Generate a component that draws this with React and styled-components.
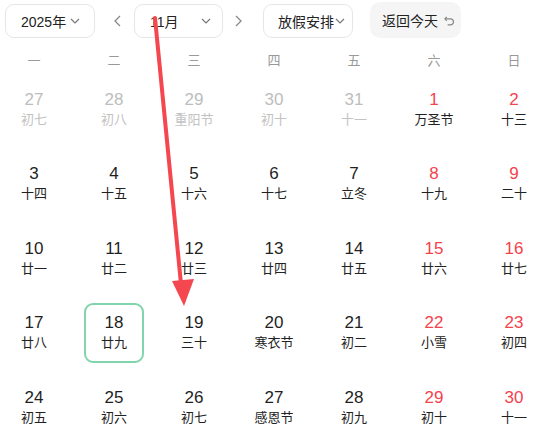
import React from 'react';
import styled, { createGlobalStyle } from 'styled-components';

const GlobalStyle = createGlobalStyle`
    html, body {
        margin: 0;
        padding: 0;
        background: #ffffff;
        font-family: "Liberation Sans", Arial, "Noto Sans CJK SC", sans-serif;
    }
`;

const Page = styled.div`
    position: relative;
    width: 545px;
    height: 433px;
    overflow: hidden;
    background: #fff;
`;

const Toolbar = styled.div`
    display: flex;
    align-items: center;
    padding: 4px 0 0 5px;
    height: 34px;
`;

const Select = styled.div`
    display: flex;
    align-items: center;
    justify-content: space-between;
    box-sizing: border-box;
    width: ${p => p.$w}px;
    height: 34px;
    padding: 0 ${p => p.$pr}px 0 ${p => p.$pl}px;
    border: 1px solid #e6e6e6;
    border-radius: 9px;
    font-size: 14px;
    color: #222;
`;

const NavArrow = styled.div`
    box-sizing: border-box;
    width: ${p => p.$w}px;
    padding-left: ${p => p.$pl}px;
    display: flex;
    align-items: center;
    color: #888;
`;

const TodayButton = styled.div`
    display: flex;
    align-items: center;
    gap: 6px;
    box-sizing: border-box;
    width: 91px;
    height: 36px;
    margin-left: 17px;
    margin-top: -2px;
    padding-left: 12px;
    border-radius: 10px;
    background: #f5f5f5;
    font-size: 14px;
    color: #222;
`;

const Grid = styled.div`
    display: grid;
    grid-template-columns: repeat(7, 80px);
    width: 560px;
    margin-left: -6px;
`;

const WeekDay = styled.div`
    height: 26px;
    margin-top: 8px;
    display: flex;
    align-items: center;
    justify-content: center;
    font-size: 13px;
    color: #999;
`;

const Cell = styled.div`
    height: 74.5px;
    display: flex;
    justify-content: center;
    align-items: center;
`;

const Day = styled.div`
    box-sizing: border-box;
    width: 60px;
    height: 60px;
    display: flex;
    flex-direction: column;
    align-items: center;
    justify-content: center;
    border: 2px solid ${p => (p.$selected ? '#82d4ac' : 'transparent')};
    border-radius: 9px;
`;

const Num = styled.div`
    font-size: 17px;
    line-height: 20px;
    color: ${p => (p.$muted ? '#bdbdbd' : p.$weekend ? '#f5424c' : '#1f1f1f')};
`;

const Lunar = styled.div`
    font-size: 13px;
    line-height: 18px;
    margin-top: 1px;
    color: ${p => (p.$muted ? '#c2c2c2' : '#222')};
`;

const Overlay = styled.svg`
    position: absolute;
    left: 0;
    top: 0;
    pointer-events: none;
`;

const Chevron = () => (
    <svg width="12" height="12" viewBox="0 0 12 12" fill="none" stroke="#777" strokeWidth="1.2">
        <path d="M2 4l4 4 4-4" />
    </svg>
);

const ArrowL = ({ flip }) => (
    <svg width="10" height="14" viewBox="0 0 10 14" fill="none" stroke="#888" strokeWidth="1.3">
        <path d={flip ? 'M3 2l5 5-5 5' : 'M7 2L2 7l5 5'} />
    </svg>
);

const UndoIcon = () => (
    <svg width="11" height="11" viewBox="0 0 12 12" fill="none" stroke="#888" strokeWidth="1.3">
        <path d="M3 2L1 4.2l2 2.2" />
        <path d="M1.3 4.2h5.7a3.3 3.3 0 0 1 0 6.6H4" />
    </svg>
);

const weekdays = ['一', '二', '三', '四', '五', '六', '日'];

const days = [
    ['27', '初七', 1], ['28', '初八', 1], ['29', '重阳节', 1], ['30', '初十', 1], ['31', '十一', 1], ['1', '万圣节'], ['2', '十三'],
    ['3', '十四'], ['4', '十五'], ['5', '十六'], ['6', '十七'], ['7', '立冬'], ['8', '十九'], ['9', '二十'],
    ['10', '廿一'], ['11', '廿二'], ['12', '廿三'], ['13', '廿四'], ['14', '廿五'], ['15', '廿六'], ['16', '廿七'],
    ['17', '廿八'], ['18', '廿九'], ['19', '三十'], ['20', '寒衣节'], ['21', '初二'], ['22', '小雪'], ['23', '初四'],
    ['24', '初五'], ['25', '初六'], ['26', '初七'], ['27', '感恩节'], ['28', '初九'], ['29', '初十'], ['30', '十一'],
];

const App = () => {
    return (
        <Page>
            <GlobalStyle />
            <Toolbar>
                <Select $w={90} $pl={15} $pr={13}>2025年 <Chevron /></Select>
                <NavArrow $w={39} $pl={18}><ArrowL /></NavArrow>
                <Select $w={89} $pl={15} $pr={10}>11月 <Chevron /></Select>
                <NavArrow $w={40} $pl={10}><ArrowL flip /></NavArrow>
                <Select $w={90} $pl={14} $pr={6}>放假安排 <Chevron /></Select>
                <TodayButton>返回今天 <UndoIcon /></TodayButton>
            </Toolbar>
            <Grid>
                {weekdays.map(w => <WeekDay key={w}>{w}</WeekDay>)}
                {days.map(([n, l, muted], i) => {
                    const weekend = i % 7 >= 5;
                    return (
                        <Cell key={i}>
                            <Day $selected={i === 22}>
                                <Num $muted={muted} $weekend={weekend}>{n}</Num>
                                <Lunar $muted={muted}>{l}</Lunar>
                            </Day>
                        </Cell>
                    );
                })}
            </Grid>
            {/* red annotation arrow */}
            <Overlay width="545" height="433" viewBox="0 0 545 433">
                <line x1="155" y1="18" x2="181" y2="284" stroke="#f5474f" strokeWidth="4" strokeLinecap="round" />
                <polygon points="172,281 194,279 184,306" fill="#f5474f" />
            </Overlay>
        </Page>
    );
};

export default App;
